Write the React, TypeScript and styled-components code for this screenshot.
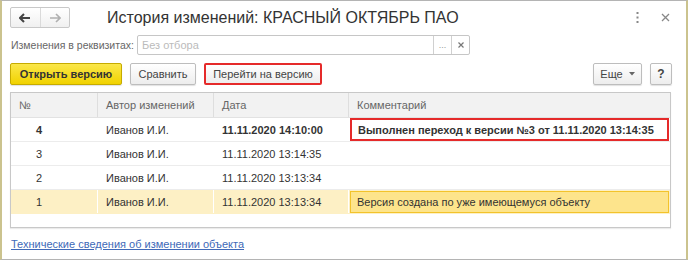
import React from 'react';
import styled, { createGlobalStyle } from 'styled-components';

const GlobalStyle = createGlobalStyle`
  html, body {
    margin: 0;
    padding: 0;
    background: #fff;
  }
  body {
    font-family: Arial, "Liberation Sans", sans-serif;
    font-size: 11px;
    color: #333;
  }
`;

interface Version {
  num: number;
  author: string;
  date: string;
  comment: string;
  current?: boolean;
  selected?: boolean;
}

const versions: Version[] = [
  { num: 4, author: 'Иванов И.И.', date: '11.11.2020 14:10:00', comment: 'Выполнен переход к версии №3 от 11.11.2020 13:14:35', current: true },
  { num: 3, author: 'Иванов И.И.', date: '11.11.2020 13:14:35', comment: '' },
  { num: 2, author: 'Иванов И.И.', date: '11.11.2020 13:13:34', comment: '' },
  { num: 1, author: 'Иванов И.И.', date: '11.11.2020 13:13:34', comment: 'Версия создана по уже имеющемуся объекту', selected: true },
];

const Window = styled.div`
  box-sizing: border-box;
  width: 688px;
  height: 260px;
  border-top: 1px solid #b4b4b4;
  border-bottom: 1px solid #b4b4b4;
  border-left: 2px solid #cbc38e;
  border-right: 2px solid #cbc38e;
  padding: 6px 14px 0 8px;
  display: flex;
  flex-direction: column;
`;

const TitleBar = styled.div`
  display: flex;
  align-items: center;
  height: 21px;
`;

const NavGroup = styled.div`
  display: flex;
  width: 60px;
  height: 21px;
  box-sizing: border-box;
  border: 1px solid #c8c8c8;
  border-radius: 2px;
  background: linear-gradient(#ffffff, #f0f0f0);
`;

const NavButton = styled.div<{ $disabled?: boolean; $first?: boolean }>`
  flex: 1;
  display: flex;
  align-items: center;
  justify-content: center;
  border-right: ${p => (p.$first ? '1px solid #dadada' : 'none')};
  color: ${p => (p.$disabled ? '#b0b0b0' : '#444')};
`;

const Title = styled.div`
  margin-left: 37px;
  font-size: 16px;
  color: #333;
  white-space: nowrap;
`;

const TitleIcons = styled.div`
  margin-left: auto;
  display: flex;
  align-items: center;
  gap: 22px;
  padding-right: 2px;
  color: #777;
`;

const FilterRow = styled.div`
  display: flex;
  align-items: center;
  margin-top: 7px;
  height: 20px;
`;

const Label = styled.span`
  color: #666;
  font-size: 10.5px;
  margin-left: 1px;
  width: 126px;
  flex-shrink: 0;
  white-space: nowrap;
`;

const InputBox = styled.div`
  display: flex;
  box-sizing: border-box;
  width: 333px;
  height: 20px;
  border: 1px solid #c6c6c6;
  border-radius: 2px;
  background: #fff;
`;

const InputText = styled.div`
  flex: 1;
  padding-left: 4px;
  line-height: 18px;
  color: #bbb;
`;

const InputButton = styled.div<{ $w: number }>`
  width: ${p => p.$w}px;
  border-left: 1px solid #d0d0d0;
  display: flex;
  align-items: center;
  justify-content: center;
  color: #999;
  font-size: 9px;
`;

const Toolbar = styled.div`
  display: flex;
  align-items: center;
  gap: 8px;
  margin-top: 8px;
  height: 22px;
`;

const Button = styled.div<{ $kind?: 'default' | 'marked'; $w: number }>`
  box-sizing: border-box;
  width: ${p => p.$w}px;
  height: 22px;
  display: flex;
  align-items: center;
  justify-content: center;
  gap: 6px;
  border-radius: 2px;
  white-space: nowrap;
  color: ${p => (p.$kind === 'default' ? '#333' : '#444')};
  font-weight: ${p => (p.$kind === 'default' ? 'bold' : 'normal')};
  background: ${p =>
    p.$kind === 'default'
      ? 'linear-gradient(#fbe74a, #f1d200)'
      : 'linear-gradient(#ffffff, #ededed)'};
  border: ${p =>
    p.$kind === 'default'
      ? '1px solid #c6ab00'
      : p.$kind === 'marked'
      ? '2px solid #e52a2a'
      : '1px solid #bdbdbd'};
  box-shadow: ${p => (p.$kind === 'marked' ? 'none' : '0 1px 1px rgba(0,0,0,0.12)')};
`;

const HelpButton = styled(Button)`
  font-weight: bold;
  font-size: 12px;
`;

const Spacer = styled.div`
  flex: 1;
`;

const Table = styled.div`
  margin-top: 7px;
  box-sizing: border-box;
  width: 661px;
  height: 136px;
  border: 1px solid #c8c8c8;
  box-shadow: 0 1px 1px rgba(0,0,0,0.08);
  background: #fff;
`;

const Columns = '87px 116px 135px 1fr';

const HeaderRow = styled.div`
  display: grid;
  grid-template-columns: ${Columns};
  height: 24px;
  background: #f2f2f2;
  border-bottom: 1px solid #e2e2e2;
`;

const HeaderCell = styled.div<{ $last?: boolean }>`
  display: flex;
  align-items: center;
  padding-left: 8px;
  color: #666;
  border-right: ${p => (p.$last ? 'none' : '1px solid #dedede')};
`;

const Row = styled.div<{ $selected?: boolean }>`
  display: grid;
  grid-template-columns: ${Columns};
  height: 23px;
  border-bottom: 1px solid ${p => (p.$selected ? '#fdf0c5' : '#ececec')};
  background: ${p => (p.$selected ? '#fdf0c5' : '#fff')};
`;

const Cell = styled.div<{ $bold?: boolean; $pad?: number; $divider?: boolean }>`
  display: flex;
  align-items: center;
  padding-left: ${p => p.$pad ?? 8}px;
  font-weight: ${p => (p.$bold ? 'bold' : 'normal')};
  color: #333;
  white-space: nowrap;
  border-right: ${p => (p.$divider ? '1px solid #fff' : 'none')};
`;

const CommentCell = styled.div<{ $mode?: 'marked' | 'selected' }>`
  display: flex;
  align-items: center;
  box-sizing: border-box;
  padding-left: ${p => (p.$mode ? 6 : 8)}px;
  white-space: nowrap;
  font-weight: ${p => (p.$mode === 'marked' ? 'bold' : 'normal')};
  color: #333;
  border: ${p =>
    p.$mode === 'marked'
      ? '2px solid #e52a2a'
      : p.$mode === 'selected'
      ? '1px solid #f3c32b'
      : 'none'};
  background: ${p => (p.$mode === 'selected' ? '#fde48c' : 'transparent')};
  margin: ${p => (p.$mode === 'selected' ? '1px 1px 0 1px' : '0 1px 0 1px')};
`;

const Link = styled.a`
  margin-top: 10px;
  margin-left: 1px;
  color: #4069b8;
  text-decoration: underline;
  cursor: pointer;
`;

const ArrowLeft = () => (
  <svg width="12" height="10" viewBox="0 0 12 10">
    <path d="M5 1 L1 5 L5 9 M1 5 H11" stroke="currentColor" strokeWidth="2" fill="none" />
  </svg>
);

const ArrowRight = () => (
  <svg width="12" height="10" viewBox="0 0 12 10">
    <path d="M7 1 L11 5 L7 9 M1 5 H11" stroke="currentColor" strokeWidth="1.6" fill="none" />
  </svg>
);

const App: React.FC = () => (
  <>
    <GlobalStyle />
    <Window>
      <TitleBar>
        <NavGroup>
          <NavButton $first>
            <ArrowLeft />
          </NavButton>
          <NavButton $disabled>
            <ArrowRight />
          </NavButton>
        </NavGroup>
        <Title>История изменений: КРАСНЫЙ ОКТЯБРЬ ПАО</Title>
        <TitleIcons>
          <svg width="3" height="11" viewBox="0 0 3 11">
            <rect x="0.5" y="0" width="2" height="2" fill="#888" />
            <rect x="0.5" y="4.5" width="2" height="2" fill="#888" />
            <rect x="0.5" y="9" width="2" height="2" fill="#888" />
          </svg>
          <svg width="9" height="9" viewBox="0 0 9 9">
            <path d="M1 1 L8 8 M8 1 L1 8" stroke="#888" strokeWidth="1.3" />
          </svg>
        </TitleIcons>
      </TitleBar>

      <FilterRow>
        <Label>Изменения в реквизитах:</Label>
        <InputBox>
          <InputText>Без отбора</InputText>
          <InputButton $w={17}>...</InputButton>
          <InputButton $w={17}>
            <svg width="6" height="6" viewBox="0 0 6 6">
              <path d="M0.5 0.5 L5.5 5.5 M5.5 0.5 L0.5 5.5" stroke="#777" strokeWidth="1.2" />
            </svg>
          </InputButton>
        </InputBox>
      </FilterRow>

      <Toolbar>
        <Button $kind="default" $w={112}>Открыть версию</Button>
        <Button $w={66}>Сравнить</Button>
        <Button $kind="marked" $w={118}>Перейти на версию</Button>
        <Spacer />
        <Button $w={49}>
          Еще
          <svg width="6" height="4" viewBox="0 0 6 4">
            <path d="M0 0 H6 L3 3.5 Z" fill="#666" />
          </svg>
        </Button>
        <HelpButton $w={22}>?</HelpButton>
      </Toolbar>

      <Table>
        <HeaderRow>
          <HeaderCell>№</HeaderCell>
          <HeaderCell>Автор изменений</HeaderCell>
          <HeaderCell>Дата</HeaderCell>
          <HeaderCell $last>Комментарий</HeaderCell>
        </HeaderRow>
        {versions.map(v => (
          <Row key={v.num} $selected={v.selected}>
            <Cell $pad={25} $bold={v.current} $divider={v.selected}>{v.num}</Cell>
            <Cell $divider={v.selected}>{v.author}</Cell>
            <Cell $bold={v.current} $divider={v.selected}>{v.date}</Cell>
            <CommentCell $mode={v.current ? 'marked' : v.selected ? 'selected' : undefined}>
              {v.comment}
            </CommentCell>
          </Row>
        ))}
      </Table>

      <Link>Технические сведения об изменении объекта</Link>
    </Window>
  </>
);

export default App;
